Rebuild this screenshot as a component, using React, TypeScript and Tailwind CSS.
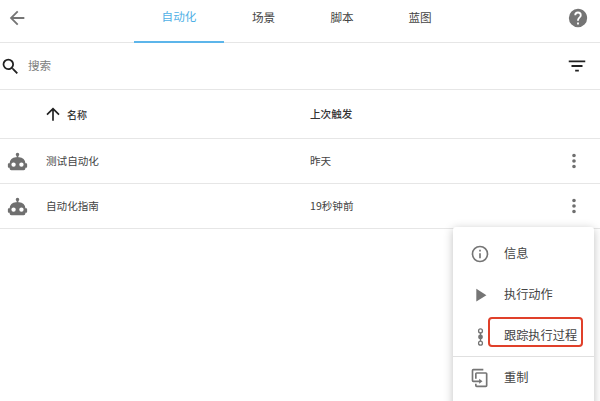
const paths = {
  back: "M20,11V13H8L13.5,18.5L12.08,19.92L4.16,12L12.08,4.08L13.5,5.5L8,11H20Z",
  help: "M15.07,11.25L14.17,12.17C13.45,12.89 13,13.5 13,15H11V14.5C11,13.39 11.45,12.39 12.17,11.67L13.41,10.41C13.78,10.05 14,9.55 14,9C14,7.89 13.1,7 12,7A2,2 0 0,0 10,9H8A4,4 0 0,1 12,5A4,4 0 0,1 16,9C16,9.88 15.64,10.67 15.07,11.25M13,19H11V17H13M12,2A10,10 0 0,0 2,12A10,10 0 0,0 12,22A10,10 0 0,0 22,12C22,6.47 17.5,2 12,2Z",
  search: "M9.5,3A6.5,6.5 0 0,1 16,9.5C16,11.11 15.41,12.59 14.44,13.73L14.71,14H15.5L20.5,19L19,20.5L14,15.5V14.71L13.73,14.44C12.59,15.41 11.11,16 9.5,16A6.5,6.5 0 0,1 3,9.5A6.5,6.5 0 0,1 9.5,3M9.5,5C7,5 5,7 5,9.5C5,12 7,14 9.5,14C12,14 14,12 14,9.5C14,7 12,5 9.5,5Z",
  filter: "M6,13H18V11H6M3,6V8H21V6M10,18H14V16H10V18Z",
  up: "M13,20H11V8L5.5,13.5L4.08,12.08L12,4.16L19.92,12.08L18.5,13.5L13,8V20Z",
  robot: "M12,2A2,2 0 0,1 14,4C14,4.74 13.6,5.39 13,5.73V7H14A7,7 0 0,1 21,14H22A1,1 0 0,1 23,15V18A1,1 0 0,1 22,19H21V20A2,2 0 0,1 19,22H5A2,2 0 0,1 3,20V19H2A1,1 0 0,1 1,18V15A1,1 0 0,1 2,14H3A7,7 0 0,1 10,7H11V5.73C10.4,5.39 10,4.74 10,4A2,2 0 0,1 12,2M7.5,13A2.5,2.5 0 0,0 5,15.5A2.5,2.5 0 0,0 7.5,18A2.5,2.5 0 0,0 10,15.5A2.5,2.5 0 0,0 7.5,13M16.5,13A2.5,2.5 0 0,0 14,15.5A2.5,2.5 0 0,0 16.5,18A2.5,2.5 0 0,0 19,15.5A2.5,2.5 0 0,0 16.5,13Z",
  dots: "M12,16A2,2 0 0,1 14,18A2,2 0 0,1 12,20A2,2 0 0,1 10,18A2,2 0 0,1 12,16M12,10A2,2 0 0,1 14,12A2,2 0 0,1 12,14A2,2 0 0,1 10,12A2,2 0 0,1 12,10M12,4A2,2 0 0,1 14,6A2,2 0 0,1 12,8A2,2 0 0,1 10,6A2,2 0 0,1 12,4Z",
  info: "M11,9H13V7H11M12,20C7.59,20 4,16.41 4,12C4,7.59 7.59,4 12,4C16.41,4 20,7.59 20,12C20,16.41 16.41,20 12,20M12,2A10,10 0 0,0 2,12A10,10 0 0,0 12,22A10,10 0 0,0 22,12A10,10 0 0,0 12,2M11,17H13V11H11V17Z",
  play: "M8,5.14V19.14L19,12.14L8,5.14Z",
  duplicate: "M11,17H4A2,2 0 0,1 2,15V3A2,2 0 0,1 4,1H16V3H4V15H11V13L15,16L11,19V17M19,21V7H8V13H6V7A2,2 0 0,1 8,5H19A2,2 0 0,1 21,7V21A2,2 0 0,1 19,23H8A2,2 0 0,1 6,21V19H8V21H19Z",
};

function Icon({ d, className }: { d: string; className: string }) {
  return (
    <svg viewBox="0 0 24 24" className={className} fill="currentColor">
      <path d={d} />
    </svg>
  );
}

// three linked rings, used for the trace entry
function TraceIcon() {
  return (
    <svg viewBox="0 0 8 20" className="w-[7px] h-[18px] mt-[2px] text-[#757575]" fill="none" stroke="currentColor" strokeWidth="1.5">
      <circle cx="4" cy="3" r="2.2" />
      <circle cx="4" cy="17" r="2.2" />
      <path d="M4 5v10" />
      <circle cx="4" cy="10" r="2" fill="currentColor" />
    </svg>
  );
}

function Row({ name, time }: { name: string; time: string }) {
  return (
    <div className="flex items-center h-[45px] border-b border-[#e6e6e6] shrink-0">
      <div className="w-[46px] pl-[7px] shrink-0">
        <Icon d={paths.robot} className="w-[21px] h-[21px] text-[#6f6f6f]" />
      </div>
      <div className="w-[264px] text-[10.6px] text-[#444444]">{name}</div>
      <div className="flex-1 text-[10.6px] text-[#444444]">{time}</div>
      <Icon d={paths.dots} className="w-[22px] h-[22px] mr-[15px] text-[#6f6f6f]" />
    </div>
  );
}

function MenuItem({ icon, label }: { icon: React.ReactNode; label: string }) {
  return (
    <div className="flex items-center h-[41px]">
      <div className="w-[51px] flex justify-center pl-[3px] shrink-0">{icon}</div>
      <span className="text-[12.2px] text-[#444444]">{label}</span>
    </div>
  );
}

export default function App() {
  return (
    <div
      className="relative w-[600px] h-[401px] overflow-hidden bg-white"
      style={{ fontFamily: '"Noto Sans CJK SC", Roboto, sans-serif' }}
    >
      {/* top bar */}
      <div className="flex h-[43px] border-b border-[#e6e6e6]">
        <div className="w-[134px] pl-[6px] pt-[7px]">
          <Icon d={paths.back} className="w-[22px] h-[22px] text-[#757575]" />
        </div>
        <div className="flex">
          <div className="w-[90px] h-[43px] pb-[8px] flex items-center justify-center text-[11.6px] text-[#4fb0e6] border-b-2 border-[#5cb5ea]">
            自动化
          </div>
          <div className="w-[79px] h-[43px] pb-[8px] flex items-center justify-center text-[11.6px] text-[#444444]">场景</div>
          <div className="w-[78px] h-[43px] pb-[8px] flex items-center justify-center text-[11.6px] text-[#444444]">脚本</div>
          <div className="w-[78px] h-[43px] pb-[8px] flex items-center justify-center text-[11.6px] text-[#444444]">蓝图</div>
        </div>
        <div className="flex-1 flex justify-end pr-[11px] pt-[7px]">
          <Icon d={paths.help} className="w-[22px] h-[22px] text-[#757575]" />
        </div>
      </div>

      {/* search */}
      <div className="flex items-center h-[47px] border-b border-[#e6e6e6]">
        <Icon d={paths.search} className="w-[21px] h-[21px] text-[#212121]" />
        <span className="ml-[7px] flex-1 text-[11.6px] text-[#808080]">搜索</span>
        <Icon d={paths.filter} className="w-[22px] h-[22px] mr-[12px] text-[#212121]" />
      </div>

      {/* table header */}
      <div className="flex items-center h-[49px] border-b border-[#e6e6e6]">
        <div className="w-[310px] flex items-center pl-[43px] shrink-0">
          <Icon d={paths.up} className="w-[20px] h-[20px] text-[#212121]" />
          <span className="ml-[4px] text-[10px] font-medium text-[#333333]">名称</span>
        </div>
        <span className="text-[10.6px] font-medium text-[#333333]">上次触发</span>
      </div>

      <Row name="测试自动化" time="昨天" />
      <Row name="自动化指南" time="19秒钟前" />

      {/* overflow menu */}
      <div className="absolute left-[453px] top-[227px] w-[141px] h-[190px] bg-white rounded-[3px] shadow-[0_2px_10px_rgba(0,0,0,0.25)] pt-[6px]">
        <MenuItem icon={<Icon d={paths.info} className="w-[20px] h-[20px] text-[#757575]" />} label="信息" />
        <MenuItem icon={<Icon d={paths.play} className="w-[22px] h-[22px] text-[#757575]" />} label="执行动作" />
        <MenuItem icon={<TraceIcon />} label="跟踪执行过程" />
        <div className="border-t border-[#e0e0e0]" />
        <MenuItem icon={<Icon d={paths.duplicate} className="w-[20px] h-[20px] text-[#757575]" />} label="重制" />
      </div>

      {/* red annotation */}
      <div className="absolute left-[488px] top-[317px] w-[95px] h-[30px] border-2 border-[#e0402a] rounded-[4px]" />
    </div>
  );
}
